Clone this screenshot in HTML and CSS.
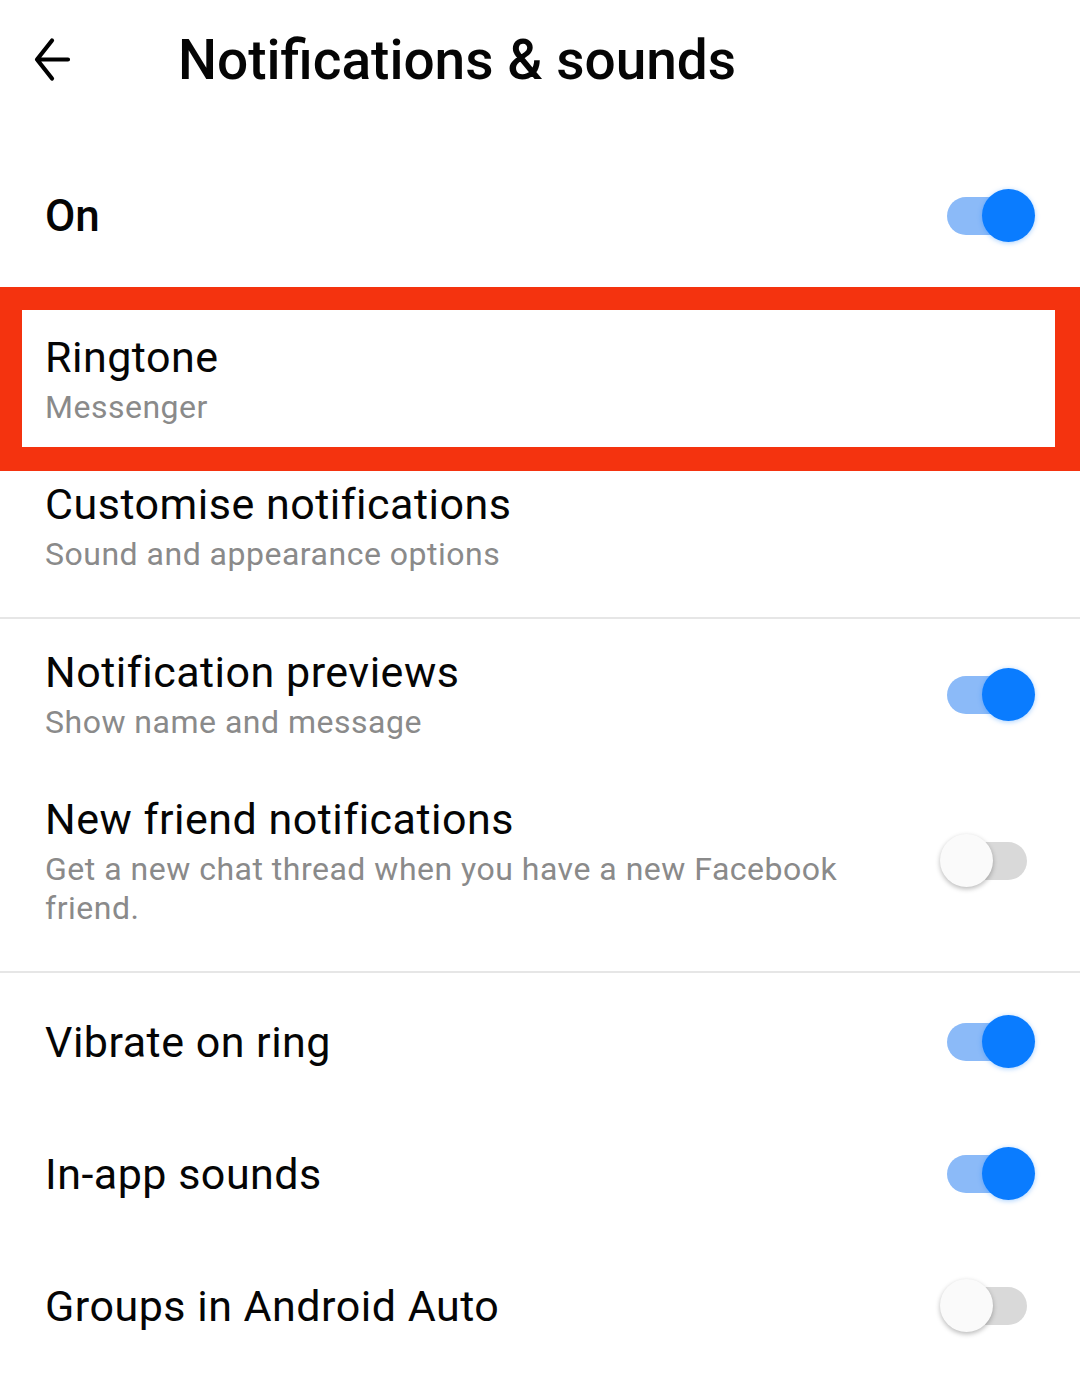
FILE: index.html
```html
<!DOCTYPE html>
<html>
<head>
  <title>Notifications &amp; sounds</title>
  <link rel="stylesheet" href="styles.css">
</head>
<body>
  <!-- Top bar -->
  <header class="topbar">
    <span class="back">
      <svg width="40" height="48" viewBox="0 0 40 48">
        <path d="M5 23.5 H36 M20 4.5 L5 23.5 L20 42.5" fill="none" stroke="#000" stroke-width="4.2" stroke-linecap="round" stroke-linejoin="round"/>
      </svg>
    </span>
    <h1>Notifications &amp; sounds</h1>
  </header>

  <main class="settings">
    <div class="row row-single row-master">
      <span class="label label-strong">On</span>
      <span class="switch on"></span>
    </div>

    <section class="group group-sound">
      <div class="row row-double highlight">
        <div class="row-text">
          <div class="label">Ringtone</div>
          <div class="sub">Messenger</div>
        </div>
      </div>
      <div class="row row-double">
        <div class="row-text">
          <div class="label">Customise notifications</div>
          <div class="sub">Sound and appearance options</div>
        </div>
      </div>
    </section>

    <section class="group group-previews">
      <div class="row row-double">
        <div class="row-text">
          <div class="label">Notification previews</div>
          <div class="sub">Show name and message</div>
        </div>
        <span class="switch on"></span>
      </div>
      <div class="row row-double">
        <div class="row-text">
          <div class="label">New friend notifications</div>
          <div class="sub">Get a new chat thread when you have a new Facebook friend.</div>
        </div>
        <span class="switch"></span>
      </div>
    </section>

    <section class="group group-last">
      <div class="row row-single">
        <span class="label">Vibrate on ring</span>
        <span class="switch on"></span>
      </div>
      <div class="row row-single">
        <span class="label">In-app sounds</span>
        <span class="switch on"></span>
      </div>
      <div class="row row-single">
        <span class="label">Groups in Android Auto</span>
        <span class="switch"></span>
      </div>
    </section>
  </main>
</body>
</html>
```

FILE: styles.css
```css
body {
  font-family: Roboto, "Noto Sans", sans-serif;
  background-color: #fff;
  color: #050505;
  margin: 0;
}

.topbar {
  display: flex;
  align-items: center;
  height: 120px;
  padding-left: 32px;
}

.back {
  display: flex;
  width: 40px;
  height: 48px;
}

.topbar h1 {
  margin: 0 0 0 106px;
  font-size: 55px;
  font-weight: 500;
}

.settings {
  padding-top: 30px;
}

.row {
  display: flex;
  align-items: center;
  justify-content: space-between;
  padding: 0 53px 0 45px;
}

.row-single {
  height: 132px;
}

.row-double {
  padding-top: 24px;
  padding-bottom: 28px;
}

.label {
  font-size: 43px;
  line-height: 50px;
  letter-spacing: 0.5px;
}

.label-strong {
  font-size: 44px;
  font-weight: 500;
  letter-spacing: 0;
}

.sub {
  margin-top: 6px;
  font-size: 32px;
  line-height: 39px;
  letter-spacing: 0.5px;
  color: #8a8a8a;
}

.row-text {
  max-width: 840px;
}

.group {
  border-bottom: 2px solid #e6e6e6;
}

.group-sound {
  padding: 26px 0 15px;
}

.group-previews {
  padding: 4px 0 15px;
}

.group-last {
  padding-top: 3px;
  border-bottom: none;
}

/* red annotation frame round the ringtone row */
.highlight {
  position: relative;
}

.highlight::after {
  content: "";
  position: absolute;
  top: -21px;
  left: 0;
  right: 0;
  bottom: -16px;
  border-style: solid;
  border-color: #f4330f;
  border-width: 23px 25px 24px 22px;
}

/* switches */
.switch {
  position: relative;
  flex: none;
  width: 80px;
  height: 38px;
  border-radius: 19px;
  background-color: #d9d9d9;
}

.switch::after {
  content: "";
  position: absolute;
  top: -8px;
  left: -7px;
  width: 53px;
  height: 53px;
  border-radius: 50%;
  background-color: #fafafa;
  box-shadow: 0 2px 5px rgba(0, 0, 0, 0.28);
}

.switch.on {
  background-color: #8bbaf8;
}

.switch.on::after {
  left: 35px;
  background-color: #0a7cff;
  box-shadow: 0 1px 5px rgba(10, 124, 255, 0.35);
}
```
